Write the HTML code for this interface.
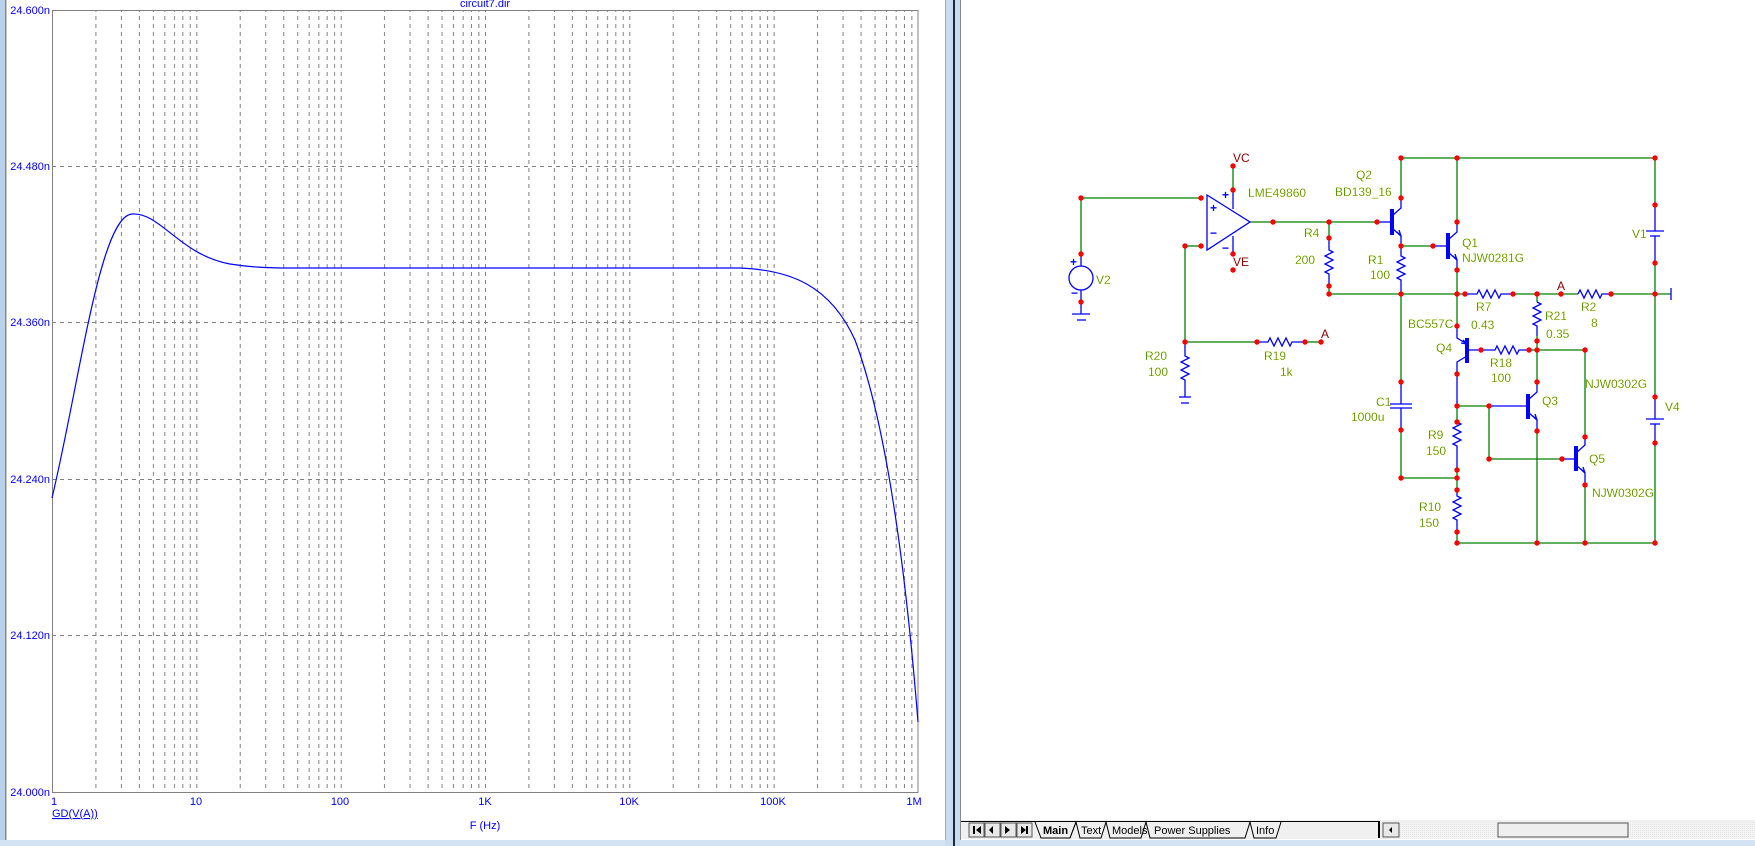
<!DOCTYPE html>
<html><head><meta charset="utf-8"><style>
html,body{margin:0;padding:0;width:1755px;height:846px;overflow:hidden;background:#fff;font-family:"Liberation Sans",Arial,sans-serif}
svg{position:absolute;left:0;top:0}
</style></head><body>
<svg width="1755" height="846" viewBox="0 0 1755 846" xmlns="http://www.w3.org/2000/svg">
<defs>
<pattern id="dec" x="52" y="0" width="144.33" height="846" patternUnits="userSpaceOnUse">
<g stroke="#808080" stroke-width="1" stroke-dasharray="4,4">
<line x1="0.5" y1="0" x2="0.5" y2="846"/><line x1="43.9" y1="0" x2="43.9" y2="846"/><line x1="69.4" y1="0" x2="69.4" y2="846"/><line x1="87.4" y1="0" x2="87.4" y2="846"/><line x1="101.4" y1="0" x2="101.4" y2="846"/><line x1="112.8" y1="0" x2="112.8" y2="846"/><line x1="122.5" y1="0" x2="122.5" y2="846"/><line x1="130.8" y1="0" x2="130.8" y2="846"/><line x1="138.2" y1="0" x2="138.2" y2="846"/>
</g></pattern>
<pattern id="hatch" width="2" height="2" patternUnits="userSpaceOnUse"><rect width="2" height="2" fill="#f4f4f4"/><rect width="1" height="1" fill="#e4e4e4"/></pattern>
</defs>
<rect x="0" y="0" width="5" height="846" fill="#b9d1ea"/>
<rect x="5" y="0" width="1.5" height="840" fill="#888"/>
<rect x="0" y="840" width="1755" height="6" fill="#d4e3f3"/>
<rect x="945" y="0" width="15" height="846" fill="#c9dcf0"/>
<line x1="945.5" y1="0" x2="945.5" y2="840" stroke="#aaa"/>
<rect x="953" y="0" width="2" height="846" fill="#1a2a3a"/>
<line x1="960.5" y1="0" x2="960.5" y2="840" stroke="#888"/>
<rect x="52" y="10" width="866" height="782" fill="url(#dec)"/>
<g stroke="#808080" stroke-dasharray="4,4">
<line x1="52" y1="166.5" x2="918" y2="166.5"/><line x1="52" y1="322.5" x2="918" y2="322.5"/><line x1="52" y1="479.5" x2="918" y2="479.5"/><line x1="52" y1="635.5" x2="918" y2="635.5"/>
</g>
<rect x="52.5" y="10.5" width="865.5" height="782" fill="none" stroke="#808080"/>
<path d="M52,498 C 80,380 100,216 132,214 C 160,212 180,255 230,264 C 250,267 265,268 290,268 L 740,268 C 790,270 830,285 855,340 C 885,420 905,560 918,722" fill="none" stroke="#0000ff" stroke-width="1.2"/>
<g fill="#0000ff" font-size="11" text-anchor="end">
<text x="50" y="14">24.600n</text><text x="50" y="170">24.480n</text><text x="50" y="326">24.360n</text><text x="50" y="483">24.240n</text><text x="50" y="639">24.120n</text><text x="50" y="796">24.000n</text>
</g>
<g fill="#0000ff" font-size="11" text-anchor="middle">
<text x="54" y="805">1</text><text x="196" y="805">10</text><text x="340" y="805">100</text><text x="485" y="805">1K</text><text x="629" y="805">10K</text><text x="773" y="805">100K</text><text x="914" y="805">1M</text>
<text x="485" y="7">circuit7.dir</text>
<text x="485" y="829">F (Hz)</text>
</g>
<text x="52" y="817" fill="#0000ff" font-size="11" text-decoration="underline">GD(V(A))</text>
<rect x="961" y="820" width="794" height="19" fill="#f0f0f0"/>
<rect x="1382" y="822" width="373" height="16" fill="url(#hatch)"/>
<line x1="961" y1="821.5" x2="1380" y2="821.5" stroke="#000"/>
<g stroke="#555" fill="#e8e8e8">
<rect x="969" y="823" width="15" height="14"/><rect x="985" y="823" width="15" height="14"/><rect x="1001" y="823" width="15" height="14"/><rect x="1017" y="823" width="15" height="14"/>
<rect x="1383" y="823" width="16" height="14"/><rect x="1498" y="823" width="130" height="14" fill="#efefef"/>
</g>
<g fill="#000">
<rect x="973" y="826" width="2" height="8"/><path d="M981,826 L976,830 L981,834Z"/>
<path d="M993,826 L989,830 L993,834Z"/><path d="M1005,826 L1010,830 L1005,834Z"/>
<path d="M1021,826 L1026,830 L1021,834Z"/><rect x="1026" y="826" width="2" height="8"/>
<path d="M1392,827 L1389,830 L1392,833Z"/>
</g>
<line x1="1379" y1="822" x2="1379" y2="838" stroke="#000" stroke-width="2"/>
<g fill="none" stroke="#000">
<path d="M1035,822 L1041,838 L1070,838 L1076,822"/>
<path d="M1076,822 L1070,838"/>
<path d="M1076,822 L1080,838 L1101,838 L1106,822"/>
<path d="M1106,822 L1110,838 L1141,838 L1146,822"/>
<path d="M1146,822 L1150,838 L1245,838 L1250,822"/>
<path d="M1250,822 L1254,838 L1276,838 L1281,822"/>
</g>
<g font-size="11" fill="#000">
<text x="1043" y="834" font-weight="bold">Main</text><text x="1081" y="834">Text</text><text x="1112" y="834">Models</text><text x="1154" y="834">Power Supplies</text><text x="1256" y="834">Info</text>
</g>
<g stroke="#008000" stroke-width="1.3" fill="none">
<path d="M1081,254 L1081,198 L1201,198"/>
<path d="M1185,246 L1201,246"/>
<path d="M1185,246 L1185,342 L1257,342"/>
<path d="M1305,342 L1321,342"/>
<path d="M1233,166 L1233,190"/>
<path d="M1250,222 L1377,222"/>
<path d="M1329,222 L1329,238"/><path d="M1329,286 L1329,294"/>
<path d="M1329,294 L1465,294"/><path d="M1513,294 L1578,294"/><path d="M1611,294 L1671,294"/>
<path d="M1401,158 L1655,158 L1655,205"/><path d="M1655,263 L1655,397"/><path d="M1655,443 L1655,543 L1457,543"/>
<path d="M1401,158 L1401,198"/><path d="M1457,158 L1457,222"/>
<path d="M1401,246 L1433,246"/>
<path d="M1401,294 L1401,382"/><path d="M1401,430 L1401,478 L1457,478"/>
<path d="M1457,270 L1457,326"/>
<path d="M1457,406 L1457,422"/><path d="M1457,470 L1457,490"/><path d="M1457,532 L1457,543"/>
<path d="M1457,406 L1489,406 L1489,459 L1562,459"/>
<path d="M1537,294 L1537,302"/><path d="M1537,336 L1537,382"/>
<path d="M1529,350 L1585,350 L1585,437"/>
<path d="M1537,431 L1537,543"/><path d="M1585,485 L1585,543"/>
</g>
<g stroke="#0000ff" stroke-width="1.3" fill="none">
<path d="M1207,195 L1207,250 L1250,222 Z"/>
<path d="M1233,190 L1233,209"/><path d="M1233,236 L1233,254"/>
<circle cx="1081" cy="278" r="12"/>
<path d="M1081,254 L1081,266"/><path d="M1081,290 L1081,302 L1081,314"/>
<path d="M1072,314 L1090,314"/><path d="M1077,320 L1086,320"/>
<path d="M1185,342 L1185,356 l4,2 l-8,4 l8,4 l-8,4 l8,4 l-8,4 l4,2 L1185,397"/>
<path d="M1179,397 L1191,397"/><path d="M1181,403 L1189,403"/>
<path d="M1257,342 L1268,342 l2,-4 l4,8 l4,-8 l4,8 l4,-8 l4,8 l2,-4 L1305,342"/>
<path d="M1329,238 L1329,250 l4,2 l-8,4 l8,4 l-8,4 l8,4 l-8,4 l4,2 L1329,286"/>
<path d="M1401,246 L1401,256 l4,2 l-8,4 l8,4 l-8,4 l8,4 l-8,4 l4,2 L1401,294"/>
<path d="M1377,222 L1392,222"/><path d="M1392,216 L1401,208 L1401,198"/><path d="M1392,228 L1401,236 L1401,246"/><path d="M1397,232 L1401,236 L1399,230"/>
<path d="M1433,246 L1448,246"/><path d="M1448,240 L1457,232 L1457,222"/><path d="M1448,252 L1457,260 L1457,270"/><path d="M1453,256 L1457,260 L1455,254"/>
<path d="M1465,294 L1477,294 l2,-4 l4,8 l4,-8 l4,8 l4,-8 l4,8 l2,-4 L1513,294"/>
<path d="M1537,302 l4,2 l-8,4 l8,4 l-8,4 l8,4 l-8,4 l4,2 L1537,336"/>
<path d="M1578,294 l2,-4 l4,8 l4,-8 l4,8 l4,-8 l4,8 l2,-4 L1611,294"/>
<path d="M1671,288 L1671,300"/>
<path d="M1457,326 L1457,338 L1467,344"/><path d="M1463,340 L1467,344 L1461,343"/><path d="M1467,356 L1457,362 L1457,374"/>
<path d="M1467,350 L1481,350"/>
<path d="M1481,350 L1495,350 l2,-4 l4,8 l4,-8 l4,8 l4,-8 l4,8 l2,-4 L1529,350"/>
<path d="M1457,374 L1457,406"/>
<path d="M1457,422 l4,2 l-8,4 l8,4 l-8,4 l8,4 l-8,4 l4,2 L1457,470"/>
<path d="M1457,490 L1457,496 l4,2 l-8,4 l8,4 l-8,4 l8,4 l-8,4 l4,2 L1457,532"/>
<path d="M1401,382 L1401,404"/><path d="M1401,408 L1401,430"/><path d="M1390,404 L1412,404"/><path d="M1390,408 L1412,408"/>
<path d="M1489,406 L1528,406"/><path d="M1528,400 L1537,392 L1537,382"/><path d="M1528,412 L1537,420 L1537,431"/><path d="M1533,416 L1537,420 L1535,414"/>
<path d="M1562,459 L1576,459"/><path d="M1576,453 L1585,445 L1585,437"/><path d="M1576,465 L1585,473 L1585,485"/><path d="M1581,469 L1585,473 L1583,467"/>
<path d="M1655,205 L1655,231"/><path d="M1646,231 L1664,231"/><path d="M1650,236 L1660,236"/><path d="M1655,236 L1655,263"/>
<path d="M1655,397 L1655,419"/><path d="M1646,419 L1664,419"/><path d="M1650,424 L1660,424"/><path d="M1655,424 L1655,443"/>
</g>
<g fill="#0000ff">
<rect x="1390" y="209" width="4" height="26"/><rect x="1446" y="233" width="4" height="26"/>
<rect x="1465" y="338" width="4" height="25"/><rect x="1526" y="394" width="4" height="25"/><rect x="1574" y="446" width="4" height="25"/>
</g>
<g fill="#0000ff" font-size="12" font-weight="bold">
<text x="1210" y="212">+</text><text x="1210" y="237">−</text><text x="1222" y="199">+</text><text x="1222" y="252">−</text>
<text x="1070" y="266">+</text><text x="1071" y="297">−</text>
</g>
<g fill="#ff0000">
<circle cx="1081" cy="198" r="2.7"/><circle cx="1201" cy="198" r="2.7"/><circle cx="1081" cy="254" r="2.7"/><circle cx="1081" cy="302" r="2.7"/>
<circle cx="1185" cy="246" r="2.7"/><circle cx="1201" cy="246" r="2.7"/><circle cx="1233" cy="166" r="2.7"/><circle cx="1233" cy="190" r="2.7"/><circle cx="1233" cy="254" r="2.7"/><circle cx="1233" cy="270" r="2.7"/>
<circle cx="1185" cy="342" r="2.7"/><circle cx="1257" cy="342" r="2.7"/><circle cx="1305" cy="342" r="2.7"/><circle cx="1321" cy="342" r="2.7"/>
<circle cx="1273" cy="222" r="2.7"/><circle cx="1329" cy="222" r="2.7"/><circle cx="1377" cy="222" r="2.7"/><circle cx="1329" cy="238" r="2.7"/><circle cx="1329" cy="286" r="2.7"/><circle cx="1329" cy="294" r="2.7"/>
<circle cx="1401" cy="158" r="2.7"/><circle cx="1457" cy="158" r="2.7"/><circle cx="1655" cy="158" r="2.7"/><circle cx="1401" cy="198" r="2.7"/><circle cx="1401" cy="246" r="2.7"/><circle cx="1433" cy="246" r="2.7"/><circle cx="1457" cy="222" r="2.7"/><circle cx="1457" cy="270" r="2.7"/>
<circle cx="1401" cy="294" r="2.7"/><circle cx="1457" cy="294" r="2.7"/><circle cx="1465" cy="294" r="2.7"/><circle cx="1513" cy="294" r="2.7"/><circle cx="1537" cy="294" r="2.7"/><circle cx="1561" cy="294" r="2.7"/><circle cx="1611" cy="294" r="2.7"/><circle cx="1655" cy="294" r="2.7"/>
<circle cx="1655" cy="205" r="2.7"/><circle cx="1655" cy="263" r="2.7"/><circle cx="1655" cy="397" r="2.7"/><circle cx="1655" cy="443" r="2.7"/>
<circle cx="1457" cy="326" r="2.7"/><circle cx="1481" cy="350" r="2.7"/><circle cx="1529" cy="350" r="2.7"/><circle cx="1537" cy="350" r="2.7"/><circle cx="1537" cy="341" r="2.7"/><circle cx="1457" cy="374" r="2.7"/>
<circle cx="1401" cy="382" r="2.7"/><circle cx="1401" cy="430" r="2.7"/><circle cx="1401" cy="478" r="2.7"/><circle cx="1457" cy="478" r="2.7"/>
<circle cx="1457" cy="406" r="2.7"/><circle cx="1489" cy="406" r="2.7"/><circle cx="1457" cy="422" r="2.7"/><circle cx="1457" cy="470" r="2.7"/><circle cx="1457" cy="490" r="2.7"/><circle cx="1457" cy="532" r="2.7"/>
<circle cx="1537" cy="382" r="2.7"/><circle cx="1537" cy="431" r="2.7"/><circle cx="1585" cy="350" r="2.7"/><circle cx="1585" cy="437" r="2.7"/><circle cx="1585" cy="485" r="2.7"/><circle cx="1489" cy="459" r="2.7"/><circle cx="1562" cy="459" r="2.7"/>
<circle cx="1457" cy="543" r="2.7"/><circle cx="1537" cy="543" r="2.7"/><circle cx="1585" cy="543" r="2.7"/><circle cx="1655" cy="543" r="2.7"/>
</g>
<g font-size="12" fill="#3a7a00" stroke="#ffff80" stroke-width="0.25">
<text x="1096" y="284">V2</text>
<text x="1248" y="197">LME49860</text>
<text x="1356" y="179">Q2</text><text x="1335" y="196">BD139_16</text>
<text x="1304" y="237">R4</text><text x="1295" y="264">200</text>
<text x="1368" y="264">R1</text><text x="1370" y="279">100</text>
<text x="1462" y="247">Q1</text><text x="1462" y="262">NJW0281G</text>
<text x="1476" y="311">R7</text><text x="1471" y="329">0.43</text>
<text x="1408" y="328">BC557C</text><text x="1436" y="352">Q4</text>
<text x="1490" y="367">R18</text><text x="1491" y="382">100</text>
<text x="1545" y="320">R21</text><text x="1546" y="338">0.35</text>
<text x="1581" y="311">R2</text><text x="1591" y="327">8</text>
<text x="1632" y="238">V1</text><text x="1665" y="411">V4</text>
<text x="1542" y="405">Q3</text><text x="1585" y="388">NJW0302G</text>
<text x="1589" y="463">Q5</text><text x="1592" y="497">NJW0302G</text>
<text x="1376" y="406">C1</text><text x="1351" y="421">1000u</text>
<text x="1428" y="439">R9</text><text x="1426" y="455">150</text>
<text x="1419" y="511">R10</text><text x="1419" y="527">150</text>
<text x="1145" y="360">R20</text><text x="1148" y="376">100</text>
<text x="1264" y="360">R19</text><text x="1280" y="376">1k</text>
</g>
<g font-size="12" fill="#8b0000">
<text x="1233" y="162">VC</text><text x="1233" y="266">VE</text><text x="1321" y="338">A</text><text x="1557" y="290">A</text>
</g>
</svg>
</body></html>
